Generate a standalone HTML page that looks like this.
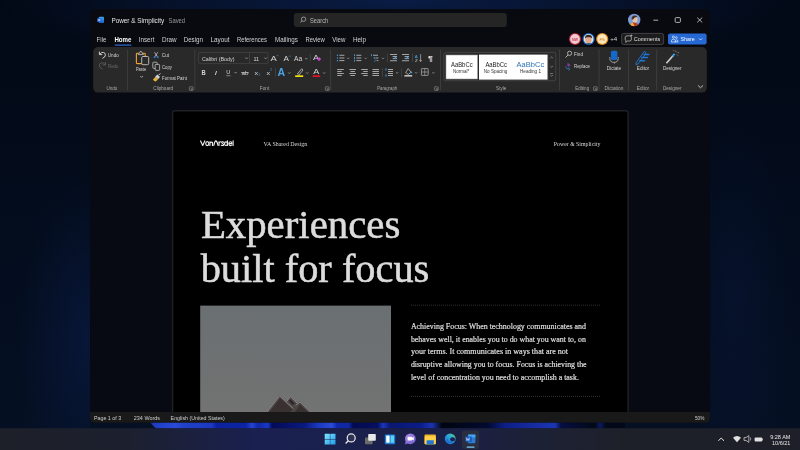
<!DOCTYPE html>
<html><head><meta charset="utf-8"><title>Word</title>
<style>
*{margin:0;padding:0}
html,body{width:800px;height:450px;overflow:hidden;background:#030816}
svg{display:block;will-change:transform}
text{white-space:pre}
</style></head><body>
<svg width="800" height="450" viewBox="0 0 800 450">
<defs>
<linearGradient id="wall" x1="0" y1="0" x2="0" y2="1">
 <stop offset="0" stop-color="#020916"/><stop offset="1" stop-color="#051024"/>
</linearGradient>
<radialGradient id="wtop" cx="0.5" cy="0" r="0.5" gradientTransform="translate(0,0) scale(1,0.3)">
 <stop offset="0" stop-color="#0c2150" stop-opacity="0.8"/><stop offset="1" stop-color="#0c2150" stop-opacity="0"/>
</radialGradient>
<clipPath id="docclip"><rect x="90" y="93" width="620" height="319"/></clipPath>
</defs>
<rect x="0" y="0" width="800" height="450" fill="url(#wall)" rx="0"/>
<rect x="0" y="0" width="800" height="450" fill="url(#wtop)" rx="0"/>
<radialGradient id="wleft" cx="90" cy="340" r="90" gradientUnits="userSpaceOnUse" gradientTransform="translate(90 340) scale(0.8 1.8) translate(-90 -340)"><stop offset="0" stop-color="#0a1c48" stop-opacity="0.6"/><stop offset="1" stop-color="#0a1c48" stop-opacity="0"/></radialGradient>
<rect x="0" y="0" width="90" height="429" fill="url(#wleft)" rx="0"/>
<radialGradient id="wright" cx="735" cy="300" r="80" gradientUnits="userSpaceOnUse" gradientTransform="translate(735 300) scale(0.7 2.2) translate(-735 -300)"><stop offset="0" stop-color="#0a1c48" stop-opacity="0.3"/><stop offset="1" stop-color="#0a1c48" stop-opacity="0"/></radialGradient>
<rect x="710" y="0" width="90" height="429" fill="url(#wright)" rx="0"/>
<rect x="90" y="9" width="620" height="414" fill="#080a10" rx="5"/>
<rect x="90" y="93" width="620" height="320" fill="#070a13" rx="0"/>
<rect x="93.2" y="47" width="613.6" height="45.6" fill="#292929" rx="5"/>
<rect x="293.8" y="13" width="213" height="14" fill="#252525" rx="3"/>
<g clip-path="url(#docclip)">
<rect x="172.55" y="110.75" width="455.6" height="330" fill="#000" rx="2.6" stroke="#1f2023" stroke-width="1.5"/>
</g>
<path d="M90 412 H710 V418 A4.8 4.8 0 0 1 705.2 422.8 H94.8 A4.8 4.8 0 0 1 90 418 Z" fill="#191919"/>
<linearGradient id="bloom" x1="150" y1="0" x2="625" y2="0" gradientUnits="userSpaceOnUse"><stop offset="0.0000" stop-color="#0a1850"/><stop offset="0.0063" stop-color="#1c3cc0"/><stop offset="0.0526" stop-color="#2a4ad8"/><stop offset="0.0737" stop-color="#2040c8"/><stop offset="0.1305" stop-color="#1c38c0"/><stop offset="0.1389" stop-color="#0c22a0"/><stop offset="0.2021" stop-color="#0c24a4"/><stop offset="0.2147" stop-color="#2444d0"/><stop offset="0.2274" stop-color="#1028a8"/><stop offset="0.2484" stop-color="#1838c8"/><stop offset="0.2568" stop-color="#030a58"/><stop offset="0.3263" stop-color="#0a1a80"/><stop offset="0.3537" stop-color="#1a38c0"/><stop offset="0.3832" stop-color="#2a4ad8"/><stop offset="0.3937" stop-color="#1028a8"/><stop offset="0.4189" stop-color="#1028a0"/><stop offset="0.4274" stop-color="#030a50"/><stop offset="0.4800" stop-color="#060f60"/><stop offset="0.4905" stop-color="#1a36c0"/><stop offset="0.5053" stop-color="#0a1870"/><stop offset="0.5684" stop-color="#0a1c88"/><stop offset="0.5937" stop-color="#1a34b0"/><stop offset="0.6147" stop-color="#010510"/><stop offset="0.7116" stop-color="#020a30"/><stop offset="0.7474" stop-color="#0e1e88"/><stop offset="0.8526" stop-color="#1a36b4"/><stop offset="0.8653" stop-color="#050e40"/><stop offset="0.9368" stop-color="#020818"/><stop offset="0.9474" stop-color="#0a1a60"/><stop offset="0.9600" stop-color="#020818"/><stop offset="1.0000" stop-color="#020818"/></linearGradient>
<linearGradient id="tbar" x1="0" y1="0" x2="800" y2="0" gradientUnits="userSpaceOnUse">
<stop offset="0" stop-color="#1d2029"/><stop offset="0.16" stop-color="#1c202e"/><stop offset="0.32" stop-color="#1a2050"/><stop offset="0.55" stop-color="#1b2048"/>
<stop offset="0.7" stop-color="#1d2132"/><stop offset="0.78" stop-color="#1e2029"/><stop offset="1" stop-color="#1e2029"/></linearGradient>
<path d="M150 422.8 L625 422.8 L625 428.4 L156 428.4 Z" fill="url(#bloom)"/>
<rect x="0" y="428.2" width="800" height="21.8" fill="url(#tbar)" rx="0"/>
<g>
<linearGradient id="wic" x1="0" y1="0" x2="0" y2="1"><stop offset="0" stop-color="#41a5ee"/><stop offset="1" stop-color="#1b5fc4"/></linearGradient>
<rect x="98.8" y="16.8" width="5.2" height="6.3" rx="0.9" fill="url(#wic)"/>
<rect x="97.2" y="18.2" width="4.3" height="3.9" rx="0.6" fill="#2a68d0"/>
<ellipse cx="99.2" cy="20" rx="1.3" ry="1" fill="#b8d4f8" opacity="0.8"/>
</g>
<text x="111.4" y="22.5" font-family="Liberation Sans" font-size="6.7" fill="#e4e4e4" textLength="52.8" lengthAdjust="spacingAndGlyphs">Power &amp; Simplicity</text>
<text x="168.5" y="22.5" font-family="Liberation Sans" font-size="6.7" fill="#9a9a9a" textLength="16.6" lengthAdjust="spacingAndGlyphs">Saved</text>
<circle cx="303.6" cy="19.2" r="2.2" stroke="#bdbdbd" stroke-width="0.7" fill="none"/>
<path d="M302 20.8 L300.4 22.5" stroke="#bdbdbd" stroke-width="0.8" fill="none"/>
<text x="310" y="22.6" font-family="Liberation Sans" font-size="6.4" fill="#b8b8b8" textLength="18.2" lengthAdjust="spacingAndGlyphs">Search</text>
<clipPath id="avc"><circle cx="634.2" cy="20" r="6.2"/></clipPath>
<g clip-path="url(#avc)"><rect x="627" y="13" width="15" height="15" fill="#7d9bd4"/><ellipse cx="635" cy="19.6" rx="2.6" ry="3.2" fill="#e6c2a6"/><path d="M631.6 19.6 Q631.4 15.4 635 15.6 Q637.2 15.8 637.4 17 Q634.4 16.6 633.2 19.6 Z" fill="#4a3428"/><path d="M629.6 27 Q630.4 22.4 633.6 22.4 L636.2 23 Q638.6 23.6 638.6 27 Z" fill="#b83a22"/><path d="M630 27 Q630.6 22.8 632.6 22.2 L634.2 25.4 L633 27 Z" fill="#e8b53a"/></g>
<path d="M653.4 20.2 H658.2" stroke="#cfcfcf" stroke-width="0.85" fill="none"/>
<rect x="675.2" y="17.6" width="5.2" height="4.8" fill="none" rx="1" stroke="#cfcfcf" stroke-width="0.85"/>
<path d="M697.2 17.6 L702.2 22.4 M702.2 17.6 L697.2 22.4" stroke="#cfcfcf" stroke-width="0.85" fill="none"/>
<text x="96.6" y="42.2" font-family="Liberation Sans" font-size="6.9" fill="#d2d2d2" textLength="9.8" lengthAdjust="spacingAndGlyphs">File</text>
<text x="114.4" y="42.2" font-family="Liberation Sans" font-size="6.9" fill="#ffffff" textLength="17" lengthAdjust="spacingAndGlyphs" font-weight="bold">Home</text>
<text x="138.8" y="42.2" font-family="Liberation Sans" font-size="6.9" fill="#d2d2d2" textLength="15.6" lengthAdjust="spacingAndGlyphs">Insert</text>
<text x="161.9" y="42.2" font-family="Liberation Sans" font-size="6.9" fill="#d2d2d2" textLength="14.7" lengthAdjust="spacingAndGlyphs">Draw</text>
<text x="183.7" y="42.2" font-family="Liberation Sans" font-size="6.9" fill="#d2d2d2" textLength="19.3" lengthAdjust="spacingAndGlyphs">Design</text>
<text x="210.4" y="42.2" font-family="Liberation Sans" font-size="6.9" fill="#d2d2d2" textLength="19.2" lengthAdjust="spacingAndGlyphs">Layout</text>
<text x="236.9" y="42.2" font-family="Liberation Sans" font-size="6.9" fill="#d2d2d2" textLength="30.1" lengthAdjust="spacingAndGlyphs">References</text>
<text x="275" y="42.2" font-family="Liberation Sans" font-size="6.9" fill="#d2d2d2" textLength="22.9" lengthAdjust="spacingAndGlyphs">Mailings</text>
<text x="305.4" y="42.2" font-family="Liberation Sans" font-size="6.9" fill="#d2d2d2" textLength="19.3" lengthAdjust="spacingAndGlyphs">Review</text>
<text x="332.2" y="42.2" font-family="Liberation Sans" font-size="6.9" fill="#d2d2d2" textLength="13.2" lengthAdjust="spacingAndGlyphs">View</text>
<text x="352.9" y="42.2" font-family="Liberation Sans" font-size="6.9" fill="#d2d2d2" textLength="13.1" lengthAdjust="spacingAndGlyphs">Help</text>
<rect x="114.6" y="44.4" width="16.8" height="1.4" fill="#2f66cc" rx="0.6"/>
<rect x="127.1" y="49.5" width="1" height="41.0" fill="#3d3d3d" rx="0"/>
<rect x="194.3" y="49.5" width="1" height="41.0" fill="#3d3d3d" rx="0"/>
<rect x="330.1" y="49.5" width="1" height="41.0" fill="#3d3d3d" rx="0"/>
<rect x="440.1" y="49.5" width="1" height="41.0" fill="#3d3d3d" rx="0"/>
<rect x="559.1" y="49.5" width="1" height="41.0" fill="#3d3d3d" rx="0"/>
<rect x="598.5" y="49.5" width="1" height="41.0" fill="#3d3d3d" rx="0"/>
<rect x="628.1" y="49.5" width="1" height="41.0" fill="#3d3d3d" rx="0"/>
<rect x="656.2" y="49.5" width="1" height="41.0" fill="#3d3d3d" rx="0"/>
<path d="M99.8 54.2 Q101.4 52 103.4 52.4 Q105.6 53 105.4 55.2 Q105.2 57.2 102.4 58.4" stroke="#dcdcdc" stroke-width="0.9" fill="none"/>
<path d="M99.4 51.6 V54.6 H102.2" stroke="#dcdcdc" stroke-width="0.9" fill="none"/>
<text x="107.8" y="56.6" font-family="Liberation Sans" font-size="5.6" fill="#d6d6d6" textLength="11" lengthAdjust="spacingAndGlyphs">Undo</text>
<path d="M105 64.6 Q103.4 62.4 101.4 62.8 Q99.2 63.4 99.4 65.6 Q99.6 67.6 102.4 69.2" stroke="#5e5e5e" stroke-width="0.9" fill="none"/>
<path d="M105.4 62 V65 H102.6" stroke="#5e5e5e" stroke-width="0.9" fill="none"/>
<text x="108" y="68.3" font-family="Liberation Sans" font-size="5.6" fill="#6a6a6a" textLength="10.4" lengthAdjust="spacingAndGlyphs">Redo</text>
<text x="111.9" y="89.6" font-family="Liberation Sans" font-size="5.2" fill="#a9a9a9" textLength="10.8" lengthAdjust="spacingAndGlyphs" text-anchor="middle">Undo</text>
<rect x="136.4" y="53.2" width="8.8" height="10.4" fill="none" rx="0.8" stroke="#f0a430" stroke-width="1.1"/>
<path d="M138.2 54.6 L140.8 51 L143.4 54.6 Z" fill="#2a2a2a" stroke="#c8c8c8" stroke-width="0.8" stroke-linejoin="round"/>
<rect x="141.7" y="56.5" width="7" height="8.2" fill="#2a2a2a" rx="1.1" stroke="#bdbdbd" stroke-width="0.95"/>
<text x="135.9" y="70.6" font-family="Liberation Sans" font-size="5.6" fill="#d6d6d6" textLength="10.3" lengthAdjust="spacingAndGlyphs">Paste</text>
<path d="M140.4 76.1 L141.6 77.3 L142.8 76.1" stroke="#cfcfcf" stroke-width="0.8" fill="none"/>
<path d="M154.5 52.2 L157.6 57 M157.8 52.2 L154.7 57" stroke="#d8d8d8" stroke-width="0.7" fill="none"/>
<circle cx="154.6" cy="57.3" r="0.95" fill="#2a78c0"/><circle cx="157.8" cy="57.3" r="0.95" fill="#2a78c0"/>
<text x="161.8" y="56.8" font-family="Liberation Sans" font-size="5.6" fill="#d6d6d6" textLength="7.3" lengthAdjust="spacingAndGlyphs">Cut</text>
<rect x="152.8" y="62.2" width="4.4" height="6.2" fill="none" rx="0.8" stroke="#d8d8d8" stroke-width="0.7"/>
<rect x="155.2" y="64.4" width="4.4" height="6" fill="#2a2a2a" rx="0.8" stroke="#d8d8d8" stroke-width="0.7"/>
<text x="162" y="68.6" font-family="Liberation Sans" font-size="5.6" fill="#d6d6d6" textLength="10" lengthAdjust="spacingAndGlyphs">Copy</text>
<path d="M153 79.4 L155.6 76.8 L158 79.2 L155.8 81.6 Q154 81.2 153 79.4 Z" fill="#e8b23a"/>
<path d="M155.2 76.4 L157.4 74.4 L160 77 L158 79.2 Z" fill="#d0d0d0"/>
<path d="M158.6 75.2 L160.4 73.4" stroke="#cfcfcf" stroke-width="1.0" fill="none"/>
<text x="162" y="80.4" font-family="Liberation Sans" font-size="5.6" fill="#d6d6d6" textLength="25" lengthAdjust="spacingAndGlyphs">Format Paint</text>
<text x="163.2" y="89.6" font-family="Liberation Sans" font-size="5.2" fill="#a9a9a9" textLength="19.8" lengthAdjust="spacingAndGlyphs" text-anchor="middle">Clipboard</text>
<rect x="189.4" y="86.8" width="3.6" height="3.6" fill="none" rx="0.3" stroke="#9a9a9a" stroke-width="0.55"/>
<path d="M190.6 88.0 L192.20000000000002 89.6 M192.20000000000002 88.39999999999999 V89.6 H191.0" stroke="#9a9a9a" stroke-width="0.5" fill="none"/>
<rect x="198.4" y="52.4" width="69.6" height="11.2" fill="none" rx="2" stroke="#444" stroke-width="0.8"/>
<rect x="249.2" y="52.8" width="0.8" height="10.400000000000006" fill="#444" rx="0"/>
<text x="202" y="60.6" font-family="Liberation Sans" font-size="5.6" fill="#d6d6d6" textLength="32.5" lengthAdjust="spacingAndGlyphs">Calibri (Body)</text>
<path d="M245.29999999999998 57.485 L246.6 58.915000000000006 L247.9 57.485" stroke="#bdbdbd" stroke-width="0.6" fill="none"/>
<text x="253.4" y="60.6" font-family="Liberation Sans" font-size="5.6" fill="#d6d6d6" textLength="5.6" lengthAdjust="spacingAndGlyphs">11</text>
<path d="M264.3 57.485 L265.6 58.915000000000006 L266.90000000000003 57.485" stroke="#bdbdbd" stroke-width="0.6" fill="none"/>
<text x="270.6" y="60.6" font-family="Liberation Sans" font-size="8" fill="#d6d6d6" textLength="6.3" lengthAdjust="spacingAndGlyphs">A</text>
<path d="M276.6 56.2 L277.5 55.2 L278.4 56.2" stroke="#3b9be0" stroke-width="0.6" fill="none"/>
<text x="283.6" y="60.6" font-family="Liberation Sans" font-size="6.4" fill="#d6d6d6" textLength="5.4" lengthAdjust="spacingAndGlyphs">A</text>
<path d="M289 56.6 L289.8 55.7 L290.6 56.6" stroke="#3b9be0" stroke-width="0.6" fill="none"/>
<text x="294" y="60.6" font-family="Liberation Sans" font-size="6.6" fill="#d6d6d6" textLength="8.2" lengthAdjust="spacingAndGlyphs">Aa</text>
<path d="M305.2 57.995000000000005 L306.3 59.205 L307.40000000000003 57.995000000000005" stroke="#bdbdbd" stroke-width="0.6" fill="none"/>
<rect x="309.84999999999997" y="54.2" width="0.7" height="7.0" fill="#4a4a4a" rx="0"/>
<text x="313" y="60.4" font-family="Liberation Sans" font-size="7" fill="#d6d6d6" textLength="6" lengthAdjust="spacingAndGlyphs">A</text>
<rect x="317.6" y="57.6" width="3" height="3" fill="#c043c8" transform="rotate(45 319.1 59.1)"/>
<text x="201.4" y="74.8" font-family="Liberation Sans" font-size="6.6" fill="#d6d6d6" textLength="4.2" lengthAdjust="spacingAndGlyphs" font-weight="bold">B</text>
<text x="214.6" y="74.6" font-family="Liberation Sans" font-size="6" fill="#d6d6d6" textLength="2.6" lengthAdjust="spacingAndGlyphs" font-style="italic">I</text>
<text x="226.3" y="74.2" font-family="Liberation Sans" font-size="6" fill="#d6d6d6" textLength="4.2" lengthAdjust="spacingAndGlyphs">U</text>
<rect x="226.2" y="75.6" width="4.3" height="0.5" fill="#d6d6d6" rx="0"/>
<path d="M234.5 71.99499999999999 L235.6 73.205 L236.7 71.99499999999999" stroke="#bdbdbd" stroke-width="0.6" fill="none"/>
<text x="241.4" y="74.6" font-family="Liberation Sans" font-size="5.8" fill="#d6d6d6" textLength="7" lengthAdjust="spacingAndGlyphs">ab</text>
<rect x="241" y="72.5" width="7.8" height="0.55" fill="#d6d6d6" rx="0"/>
<text x="254.6" y="74.6" font-family="Liberation Sans" font-size="6" fill="#d6d6d6" textLength="3.6" lengthAdjust="spacingAndGlyphs">x</text>
<text x="258.4" y="76.4" font-family="Liberation Sans" font-size="3.4" fill="#3b9be0" textLength="1.8" lengthAdjust="spacingAndGlyphs">2</text>
<text x="266.4" y="74.6" font-family="Liberation Sans" font-size="6" fill="#d6d6d6" textLength="3.6" lengthAdjust="spacingAndGlyphs">x</text>
<text x="270.2" y="70.6" font-family="Liberation Sans" font-size="3.4" fill="#3b9be0" textLength="1.8" lengthAdjust="spacingAndGlyphs">2</text>
<rect x="275.15" y="68.4" width="0.7" height="8.199999999999989" fill="#4a4a4a" rx="0"/>
<text x="277.6" y="76" font-family="Liberation Sans" font-size="10" fill="#4aa3e6" textLength="7.6" lengthAdjust="spacingAndGlyphs" font-weight="bold">A</text>
<path d="M288.2 72.395 L289.3 73.605 L290.40000000000003 72.395" stroke="#bdbdbd" stroke-width="0.6" fill="none"/>
<path d="M297.4 74 L301.6 68.8 L303 70 L298.8 75.2 Z" stroke="#d8d8d8" stroke-width="0.7" fill="none"/>
<rect x="295.2" y="75.3" width="8" height="1.7" fill="#f2e600" rx="0"/>
<path d="M306.09999999999997 72.395 L307.2 73.605 L308.3 72.395" stroke="#bdbdbd" stroke-width="0.6" fill="none"/>
<text x="313.2" y="74.2" font-family="Liberation Sans" font-size="7" fill="#d6d6d6" textLength="6" lengthAdjust="spacingAndGlyphs">A</text>
<rect x="312.6" y="75.3" width="7.6" height="1.7" fill="#e81123" rx="0"/>
<path d="M323.09999999999997 72.395 L324.2 73.605 L325.3 72.395" stroke="#bdbdbd" stroke-width="0.6" fill="none"/>
<text x="264.5" y="89.6" font-family="Liberation Sans" font-size="5.2" fill="#a9a9a9" textLength="9.4" lengthAdjust="spacingAndGlyphs" text-anchor="middle">Font</text>
<rect x="325.4" y="86.8" width="3.6" height="3.6" fill="none" rx="0.3" stroke="#9a9a9a" stroke-width="0.55"/>
<path d="M326.59999999999997 88.0 L328.2 89.6 M328.2 88.39999999999999 V89.6 H327.0" stroke="#9a9a9a" stroke-width="0.5" fill="none"/>
<circle cx="337.5" cy="55.2" r="0.75" fill="#3b9be0"/>
<circle cx="337.5" cy="58" r="0.75" fill="#3b9be0"/>
<circle cx="337.5" cy="60.7" r="0.75" fill="#3b9be0"/>
<rect x="339.4" y="54.825" width="5" height="0.75" fill="#cfcfcf" rx="0"/>
<rect x="339.4" y="57.625" width="5" height="0.75" fill="#cfcfcf" rx="0"/>
<rect x="339.4" y="60.325" width="5" height="0.75" fill="#cfcfcf" rx="0"/>
<path d="M347.2 57.75 L348.2 58.849999999999994 L349.2 57.75" stroke="#bdbdbd" stroke-width="0.6" fill="none"/>
<rect x="354.1" y="54.2" width="0.9" height="2" fill="#3b9be0" rx="0"/>
<rect x="354.1" y="57" width="0.9" height="2" fill="#3b9be0" rx="0"/>
<rect x="354.1" y="59.7" width="0.9" height="2" fill="#3b9be0" rx="0"/>
<rect x="356.3" y="54.825" width="5" height="0.75" fill="#cfcfcf" rx="0"/>
<rect x="356.3" y="57.625" width="5" height="0.75" fill="#cfcfcf" rx="0"/>
<rect x="356.3" y="60.325" width="5" height="0.75" fill="#cfcfcf" rx="0"/>
<path d="M364.6 57.75 L365.6 58.849999999999994 L366.6 57.75" stroke="#bdbdbd" stroke-width="0.6" fill="none"/>
<rect x="371" y="54.2" width="0.9" height="2" fill="#3b9be0" rx="0"/>
<rect x="373.8" y="57" width="0.9" height="2" fill="#3b9be0" rx="0"/>
<path d="M375.6 59.6 L374.4 62" stroke="#3b9be0" stroke-width="0.6" fill="none"/>
<rect x="373" y="54.825" width="5" height="0.75" fill="#cfcfcf" rx="0"/>
<rect x="375.4" y="57.625" width="3" height="0.75" fill="#cfcfcf" rx="0"/>
<rect x="376.6" y="60.325" width="1.8" height="0.75" fill="#cfcfcf" rx="0"/>
<path d="M382.0 57.75 L383 58.849999999999994 L384.0 57.75" stroke="#bdbdbd" stroke-width="0.6" fill="none"/>
<rect x="386.95" y="53.6" width="0.7" height="8.399999999999999" fill="#4a4a4a" rx="0"/>
<rect x="390" y="54.225" width="7" height="0.75" fill="#cfcfcf" rx="0"/>
<rect x="390" y="60.425" width="7" height="0.75" fill="#cfcfcf" rx="0"/>
<rect x="392.6" y="56.225" width="4.4" height="0.75" fill="#cfcfcf" rx="0"/>
<rect x="392.6" y="58.325" width="4.4" height="0.75" fill="#cfcfcf" rx="0"/>
<rect x="394.6" y="56.8" width="1.8" height="1.8" fill="#3b9be0"/>
<rect x="402" y="54.225" width="7" height="0.75" fill="#cfcfcf" rx="0"/>
<rect x="402" y="60.425" width="7" height="0.75" fill="#cfcfcf" rx="0"/>
<rect x="404.6" y="56.225" width="4.4" height="0.75" fill="#cfcfcf" rx="0"/>
<rect x="404.6" y="58.325" width="4.4" height="0.75" fill="#cfcfcf" rx="0"/>
<rect x="406.6" y="56.8" width="1.8" height="1.8" fill="#3b9be0"/>
<rect x="412.15" y="53.6" width="0.7" height="8.399999999999999" fill="#4a4a4a" rx="0"/>
<text x="414.8" y="57.8" font-family="Liberation Sans" font-size="4" fill="#3b9be0" textLength="3" lengthAdjust="spacingAndGlyphs" font-weight="bold">A</text>
<text x="415" y="61.6" font-family="Liberation Sans" font-size="4" fill="#cfcfcf" textLength="2.8" lengthAdjust="spacingAndGlyphs">Z</text>
<path d="M420.6 54.2 V61.4 M419.4 60 L420.6 61.5 L421.8 60" stroke="#cfcfcf" stroke-width="0.6" fill="none"/>
<text x="428" y="61.4" font-family="Liberation Sans" font-size="7.4" fill="#e0e0e0" textLength="5" lengthAdjust="spacingAndGlyphs" font-weight="bold">¶</text>
<rect x="337.2" y="69.225" width="6.6" height="0.75" fill="#cfcfcf" rx="0"/>
<rect x="337.2" y="71.225" width="4.6" height="0.75" fill="#cfcfcf" rx="0"/>
<rect x="337.2" y="73.225" width="6.6" height="0.75" fill="#cfcfcf" rx="0"/>
<rect x="337.2" y="75.225" width="4.6" height="0.75" fill="#cfcfcf" rx="0"/>
<rect x="349.4" y="69.225" width="6.6" height="0.75" fill="#cfcfcf" rx="0"/>
<rect x="349.4" y="73.225" width="6.6" height="0.75" fill="#cfcfcf" rx="0"/>
<rect x="350.4" y="71.225" width="4.6" height="0.75" fill="#cfcfcf" rx="0"/>
<rect x="350.4" y="75.225" width="4.6" height="0.75" fill="#cfcfcf" rx="0"/>
<rect x="361.2" y="69.225" width="6.6" height="0.75" fill="#cfcfcf" rx="0"/>
<rect x="361.2" y="73.225" width="6.6" height="0.75" fill="#cfcfcf" rx="0"/>
<rect x="363.2" y="71.225" width="4.6" height="0.75" fill="#cfcfcf" rx="0"/>
<rect x="363.2" y="75.225" width="4.6" height="0.75" fill="#cfcfcf" rx="0"/>
<rect x="372.4" y="69.225" width="6.6" height="0.75" fill="#cfcfcf" rx="0"/>
<rect x="372.4" y="71.225" width="6.6" height="0.75" fill="#cfcfcf" rx="0"/>
<rect x="372.4" y="73.225" width="6.6" height="0.75" fill="#cfcfcf" rx="0"/>
<rect x="372.4" y="75.225" width="6.6" height="0.75" fill="#cfcfcf" rx="0"/>
<rect x="382.25" y="68.2" width="0.7" height="8.599999999999994" fill="#4a4a4a" rx="0"/>
<rect x="388" y="69.225" width="5" height="0.75" fill="#cfcfcf" rx="0"/>
<rect x="388" y="71.225" width="5" height="0.75" fill="#cfcfcf" rx="0"/>
<rect x="388" y="73.225" width="5" height="0.75" fill="#cfcfcf" rx="0"/>
<rect x="388" y="75.225" width="5" height="0.75" fill="#cfcfcf" rx="0"/>
<path d="M386 68.6 V71 M385.1 69.6 L386 68.6 L386.9 69.6 M386 73.8 V76.4 M385.1 75.4 L386 76.4 L386.9 75.4" stroke="#3b9be0" stroke-width="0.6" fill="none"/>
<path d="M396.2 72.25 L397.2 73.35 L398.2 72.25" stroke="#bdbdbd" stroke-width="0.6" fill="none"/>
<rect x="401.25" y="68.2" width="0.7" height="8.599999999999994" fill="#4a4a4a" rx="0"/>
<path d="M405.6 72.6 L408.2 68.6 L411 72.2 L408.4 74.4 Z" stroke="#cfcfcf" stroke-width="0.7" fill="none"/>
<circle cx="411.4" cy="72.4" r="0.9" fill="#3b9be0"/>
<rect x="404.4" y="75.2" width="7.8" height="1.3" fill="#e0e0e0" rx="0"/>
<path d="M415.2 72.25 L416.2 73.35 L417.2 72.25" stroke="#bdbdbd" stroke-width="0.6" fill="none"/>
<rect x="421.4" y="68.6" width="6.8" height="6.8" fill="none" rx="0.5" stroke="#cfcfcf" stroke-width="0.6"/>
<path d="M424.8 68.6 V75.4 M421.4 72 H428.2" stroke="#cfcfcf" stroke-width="0.5" fill="none"/>
<path d="M432.4 72.25 L433.4 73.35 L434.4 72.25" stroke="#bdbdbd" stroke-width="0.6" fill="none"/>
<text x="387.2" y="89.6" font-family="Liberation Sans" font-size="5.2" fill="#a9a9a9" textLength="20" lengthAdjust="spacingAndGlyphs" text-anchor="middle">Paragraph</text>
<rect x="434.6" y="86.8" width="3.6" height="3.6" fill="none" rx="0.3" stroke="#9a9a9a" stroke-width="0.55"/>
<path d="M435.8 88.0 L437.40000000000003 89.6 M437.40000000000003 88.39999999999999 V89.6 H436.20000000000005" stroke="#9a9a9a" stroke-width="0.5" fill="none"/>
<rect x="443.8" y="52.4" width="112" height="28.4" fill="none" rx="2" stroke="#4a4a4a" stroke-width="0.8"/>
<rect x="446" y="55" width="31.6" height="24" fill="#ffffff" rx="0" stroke="#9a9a9a" stroke-width="0.6"/>
<rect x="479" y="54.6" width="68.6" height="25" fill="#ffffff" rx="0"/>
<text x="451" y="66.8" font-family="Liberation Sans" font-size="6.6" fill="#222" textLength="21.6" lengthAdjust="spacingAndGlyphs">AaBbCc</text>
<text x="453" y="73.3" font-family="Liberation Sans" font-size="5.1" fill="#333" textLength="16.2" lengthAdjust="spacingAndGlyphs">Normal*</text>
<text x="485.4" y="66.8" font-family="Liberation Sans" font-size="6.6" fill="#222" textLength="21.6" lengthAdjust="spacingAndGlyphs">AaBbCc</text>
<text x="483.8" y="73.3" font-family="Liberation Sans" font-size="5.1" fill="#333" textLength="23.6" lengthAdjust="spacingAndGlyphs">No Spacing</text>
<text x="516.6" y="66.8" font-family="Liberation Sans" font-size="7.6" fill="#2e74b5" textLength="27.6" lengthAdjust="spacingAndGlyphs">AaBbCc</text>
<text x="520" y="73.3" font-family="Liberation Sans" font-size="5.1" fill="#333" textLength="21" lengthAdjust="spacingAndGlyphs">Heading 1</text>
<rect x="548.6" y="53.6" width="6" height="7.8" fill="#2a2a2a" rx="0"/>
<rect x="548.6" y="62.2" width="6" height="7.8" fill="#2a2a2a" rx="0"/>
<rect x="548.6" y="70.8" width="6" height="7.8" fill="#2a2a2a" rx="0"/>
<path d="M550.3 58.2 L551.6 57 L552.9 58.2" stroke="#bdbdbd" stroke-width="0.55" fill="none"/>
<path d="M550.3 66 L551.6 67.2 L552.9 66" stroke="#bdbdbd" stroke-width="0.55" fill="none"/>
<rect x="550.3" y="73.4" width="2.6" height="0.5" fill="#bdbdbd" rx="0"/>
<path d="M550.3 75 L551.6 76.2 L552.9 75" stroke="#bdbdbd" stroke-width="0.55" fill="none"/>
<rect x="547.9000000000001" y="53.4" width="0.6" height="26.6" fill="#3d3d3d" rx="0"/>
<text x="501.2" y="89.6" font-family="Liberation Sans" font-size="5.2" fill="#a9a9a9" textLength="10.2" lengthAdjust="spacingAndGlyphs" text-anchor="middle">Style</text>
<circle cx="569.6" cy="53.3" r="2.1" stroke="#d0d0d0" stroke-width="0.75" fill="none"/>
<path d="M568.1 54.9 L565.6 57.5" stroke="#d0d0d0" stroke-width="0.85" fill="none"/>
<text x="574" y="56.4" font-family="Liberation Sans" font-size="5.6" fill="#d6d6d6" textLength="9" lengthAdjust="spacingAndGlyphs">Find</text>
<path d="M567.6 62.6 L570.6 65.2 L569.2 66.8 L567.2 66 Z" fill="#7a3c98"/>
<path d="M565.4 66.2 Q565.8 69.4 569.6 69 M568.2 67.8 L569.8 69 L568.6 70.4" stroke="#2a80c0" stroke-width="0.75" fill="none"/>
<text x="574" y="68.4" font-family="Liberation Sans" font-size="5.6" fill="#d6d6d6" textLength="16" lengthAdjust="spacingAndGlyphs">Replace</text>
<text x="582.2" y="89.6" font-family="Liberation Sans" font-size="5.2" fill="#a9a9a9" textLength="14" lengthAdjust="spacingAndGlyphs" text-anchor="middle">Editing</text>
<rect x="593.6" y="86.8" width="3.6" height="3.6" fill="none" rx="0.3" stroke="#9a9a9a" stroke-width="0.55"/>
<path d="M594.8000000000001 88.0 L596.4 89.6 M596.4 88.39999999999999 V89.6 H595.2" stroke="#9a9a9a" stroke-width="0.5" fill="none"/>
<path d="M609.8 57 V58.4 Q609.8 62.4 614 62.4 Q618.2 62.4 618.2 58.4 V57" stroke="#9c9c9c" stroke-width="1" fill="none"/>
<rect x="614" y="62.2" width="0.9" height="1.4" fill="#9c9c9c" rx="0"/>
<rect x="610.9" y="50.7" width="6.5" height="9.4" fill="#1668c8" rx="1.7"/>
<text x="614" y="70.2" font-family="Liberation Sans" font-size="5.6" fill="#d6d6d6" textLength="14.4" lengthAdjust="spacingAndGlyphs" text-anchor="middle">Dictate</text>
<text x="614" y="89.6" font-family="Liberation Sans" font-size="5.2" fill="#a9a9a9" textLength="18.8" lengthAdjust="spacingAndGlyphs" text-anchor="middle">Dictation</text>
<path d="M636.2 62.6 L644.4 51.4 L646.2 52.8 L638 64 L636 64.6 Z" fill="none" stroke="#1f78d8" stroke-width="0.9" stroke-linejoin="round"/>
<rect x="643.4" y="53.7" width="6" height="1.5" fill="#1b74d8" rx="0.5"/>
<rect x="641.2" y="56.8" width="6.8" height="1.5" fill="#1b74d8" rx="0.5"/>
<rect x="639.2" y="59.9" width="6" height="1.5" fill="#1b74d8" rx="0.5"/>
<text x="643" y="70.2" font-family="Liberation Sans" font-size="5.6" fill="#d6d6d6" textLength="12.4" lengthAdjust="spacingAndGlyphs" text-anchor="middle">Editor</text>
<text x="643" y="89.6" font-family="Liberation Sans" font-size="5.2" fill="#a9a9a9" textLength="12.4" lengthAdjust="spacingAndGlyphs" text-anchor="middle">Editor</text>
<path d="M666.4 63.2 L673.4 55.2" stroke="#cfcfcf" stroke-width="1.6" fill="none"/>
<path d="M672.4 56.4 L674.6 53.8" stroke="#3b9be0" stroke-width="1.8" fill="none"/>
<path d="M675.8 50.6 V52 M677.6 52.6 H679 M677 54.6 L678 55.6 M674 51 L673.4 50.2" stroke="#d0d0d0" stroke-width="0.5" fill="none"/>
<text x="672.2" y="70.2" font-family="Liberation Sans" font-size="5.6" fill="#d6d6d6" textLength="18.6" lengthAdjust="spacingAndGlyphs" text-anchor="middle">Designer</text>
<text x="672.2" y="89.6" font-family="Liberation Sans" font-size="5.2" fill="#a9a9a9" textLength="18.6" lengthAdjust="spacingAndGlyphs" text-anchor="middle">Designer</text>
<path d="M698 85.4 L700.5 87.8 L703 85.4" stroke="#cfcfcf" stroke-width="0.9" fill="none"/>
<circle cx="575" cy="39" r="6.1" fill="#b3263a"/><circle cx="575" cy="39" r="4.9" fill="#f2c9d1"/>
<text x="575" y="40.6" font-family="Liberation Sans" font-size="3.8" fill="#c0465a" textLength="6" lengthAdjust="spacingAndGlyphs" font-weight="bold" text-anchor="middle">MW</text>
<circle cx="588.6" cy="39" r="6.1" fill="#1766c2"/><circle cx="588.6" cy="39" r="4.9" fill="#dfe6ea"/>
<clipPath id="av2"><circle cx="588.6" cy="39" r="4.9"/></clipPath><g clip-path="url(#av2)"><ellipse cx="588.4" cy="39.8" rx="3.2" ry="3.6" fill="#e2aa8a"/><path d="M584.8 38.6 Q585 34.6 588.6 34.8 Q592.4 35 592.2 38.6 Q590.6 36.8 588.4 37.2 Q586.2 36.8 584.8 38.6Z" fill="#3a2a22"/><path d="M584 44.2 Q588.6 41.6 593.2 44.2 V45 H584Z" fill="#3c3a44"/></g>
<circle cx="602.2" cy="39" r="6.1" fill="#dc8a1c"/><circle cx="602.2" cy="39" r="4.9" fill="#fde5bc"/>
<text x="602.2" y="40.8" font-family="Liberation Sans" font-size="4.4" fill="#b77420" textLength="5.4" lengthAdjust="spacingAndGlyphs" text-anchor="middle">FS</text>
<text x="610.2" y="41.2" font-family="Liberation Sans" font-size="6" fill="#d6d6d6" textLength="7" lengthAdjust="spacingAndGlyphs">+4</text>
<rect x="621.6" y="33.4" width="42" height="11.2" fill="#1c1c1c" rx="2" stroke="#4e4e4e" stroke-width="0.8"/>
<path d="M627.6 35.8 H629.6 Q631.4 35.8 631.4 37.6 V39.2 Q631.4 41 629.6 41 H627.4 L625.8 42.4 V40.6 Q625.2 40.2 625.2 39.2 V37.6 Q625.2 35.8 627.6 35.8 Z" stroke="#d0d0d0" stroke-width="0.7" fill="none"/>
<path d="M631.4 34.4 V36.6 M630.3 35.5 H632.5" stroke="#d0d0d0" stroke-width="0.55" fill="none"/>
<text x="633.8" y="41.4" font-family="Liberation Sans" font-size="6" fill="#e0e0e0" textLength="26.4" lengthAdjust="spacingAndGlyphs">Comments</text>
<rect x="668" y="33.4" width="38.6" height="11.2" fill="#2669d5" rx="2"/>
<circle cx="673.4" cy="37" r="1.1" fill="none" stroke="#fff" stroke-width="0.6"/><circle cx="676.4" cy="37.6" r="0.9" fill="none" stroke="#fff" stroke-width="0.6"/>
<path d="M671.6 42 V40.4 Q671.6 39.2 673.4 39.2 Q675.2 39.2 675.2 40.4 V42 M675.6 42 V40.8 Q675.8 39.8 676.6 39.8 Q677.8 39.8 677.8 40.8 V42 M671.2 42 H678.2" stroke="#ffffff" stroke-width="0.6" fill="none"/>
<text x="680.6" y="41.4" font-family="Liberation Sans" font-size="6" fill="#ffffff" textLength="14" lengthAdjust="spacingAndGlyphs">Share</text>
<path d="M699 38.4 L700.6 40 L702.2 38.4" stroke="#ffffff" stroke-width="0.65" fill="none"/>
<g stroke="#ececec" stroke-width="1.15" fill="none" stroke-linecap="round" stroke-linejoin="round"><path d="M200.6 140.9 L202.7 145.5 L204.8 140.9"/><ellipse cx="207.3" cy="143.6" rx="1.55" ry="1.95"/><path d="M209.9 145.5 V141.8 M209.9 143.1 Q211.2 141.5 212.5 142.4 V145.5"/><path d="M213.8 145.5 Q214.8 140.6 215.9 140.9 Q217.2 141.3 218 145.5"/><path d="M219 145.5 V141.8 M219 143.2 Q219.8 141.7 220.9 141.8"/><path d="M223.9 142.3 Q223.1 141.5 222.2 141.8 Q221.2 142.5 222.4 143.4 Q223.9 144.1 223.7 145 Q222.9 145.9 221.3 145.2"/><ellipse cx="226" cy="143.7" rx="1.45" ry="1.85"/><path d="M227.5 140.8 V145.5"/><path d="M229 143.6 H231.9 Q231.9 141.7 230.4 141.7 Q228.9 141.7 228.9 143.7 Q228.9 145.6 230.5 145.6 Q231.4 145.6 231.9 145"/><path d="M233.1 140.8 V145.5"/></g>
<text x="263.5" y="145.7" font-family="Liberation Serif" font-size="6.2" fill="#d8d8d8" textLength="43.6" lengthAdjust="spacingAndGlyphs">VA Shared Design</text>
<text x="553.8" y="145.9" font-family="Liberation Serif" font-size="6.2" fill="#d8d8d8" textLength="46.6" lengthAdjust="spacingAndGlyphs">Power &amp; Simplicity</text>
<text x="200.9" y="237.6" font-family="Liberation Serif" font-size="40.3" fill="#dcdcdc" textLength="199.4" lengthAdjust="spacingAndGlyphs" stroke="#dcdcdc" stroke-width="0.55">Experiences</text>
<text x="200.7" y="282" font-family="Liberation Serif" font-size="40.3" fill="#dcdcdc" textLength="228.6" lengthAdjust="spacingAndGlyphs" stroke="#dcdcdc" stroke-width="0.55">built for focus</text>
<path d="M411 305.2 H600 M411 396.4 H600" stroke="#5a5a5a" stroke-width="0.7" stroke-dasharray="0.8 1.2"/>
<text x="410.9" y="329.3" font-family="Liberation Serif" font-size="7.9" fill="#dcdcdc" textLength="175" lengthAdjust="spacingAndGlyphs" stroke="#dcdcdc" stroke-width="0.22">Achieving Focus: When technology communicates and</text>
<text x="410.9" y="341.8" font-family="Liberation Serif" font-size="7.9" fill="#dcdcdc" textLength="175" lengthAdjust="spacingAndGlyphs" stroke="#dcdcdc" stroke-width="0.22">behaves well, it enables you to do what you want to, on</text>
<text x="410.9" y="354.4" font-family="Liberation Serif" font-size="7.9" fill="#dcdcdc" textLength="157.2" lengthAdjust="spacingAndGlyphs" stroke="#dcdcdc" stroke-width="0.22">your terms. It communicates in ways that are not</text>
<text x="410.9" y="366.9" font-family="Liberation Serif" font-size="7.9" fill="#dcdcdc" textLength="175.7" lengthAdjust="spacingAndGlyphs" stroke="#dcdcdc" stroke-width="0.22">disruptive allowing you to focus. Focus is achieving the</text>
<text x="410.9" y="379.5" font-family="Liberation Serif" font-size="7.9" fill="#dcdcdc" textLength="168" lengthAdjust="spacingAndGlyphs" stroke="#dcdcdc" stroke-width="0.22">level of concentration you need to accomplish a task.</text>
<g clip-path="url(#docclip)">
<linearGradient id="imgg" x1="0" y1="0" x2="0" y2="1"><stop offset="0" stop-color="#6a6f72"/><stop offset="1" stop-color="#727372"/></linearGradient>
<rect x="200.2" y="305.6" width="190.8" height="106.4" fill="url(#imgg)" rx="0"/>
<path d="M266 413 L279.7 395.3 L286.5 401.4 L290.3 396 L297.4 403 L300 401.6 L311.5 413 Z" fill="#4a4445"/>
<path d="M268.8 413 L280.2 398.2 L292.5 409.6 L289 413 Z" fill="#38312f"/>
<path d="M294.5 413 L300 404.6 L308.6 413 Z" fill="#38322f"/>
<path d="M288.8 400.8 L290.5 399.4 L294.5 403.6 L292.8 405 Z" fill="#2a2526"/>
<path d="M266.6 412.6 L279.7 395.9 L293.4 408.6 M286.6 401.6 L290.3 396.5 L297.6 403.6 M295.6 405.4 L300 402.1 L311 412.6" stroke="#8d8384" stroke-width="1" fill="none"/>
</g>
<text x="93.9" y="419.6" font-family="Liberation Sans" font-size="5.2" fill="#cfcfcf" textLength="27.3" lengthAdjust="spacingAndGlyphs">Page 1 of 3</text>
<text x="133.8" y="419.6" font-family="Liberation Sans" font-size="5.2" fill="#cfcfcf" textLength="26.2" lengthAdjust="spacingAndGlyphs">234 Words</text>
<text x="170.6" y="419.6" font-family="Liberation Sans" font-size="5.2" fill="#cfcfcf" textLength="54.2" lengthAdjust="spacingAndGlyphs">English (United States)</text>
<text x="695" y="419.6" font-family="Liberation Sans" font-size="5.2" fill="#cfcfcf" textLength="9.4" lengthAdjust="spacingAndGlyphs">50%</text>
<defs>
<linearGradient id="winlogo" x1="324.6" y1="433.8" x2="335.4" y2="444.8" gradientUnits="userSpaceOnUse"><stop offset="0" stop-color="#80e4ff"/><stop offset="1" stop-color="#1d9ae8"/></linearGradient>
<linearGradient id="teams" x1="0" y1="0" x2="1" y2="1"><stop offset="0" stop-color="#b48ce8"/><stop offset="1" stop-color="#6a5ad0"/></linearGradient>
<linearGradient id="edge" x1="1" y1="0" x2="0" y2="1"><stop offset="0" stop-color="#62d45a"/><stop offset="0.45" stop-color="#27a8e0"/><stop offset="1" stop-color="#1862c8"/></linearGradient>
</defs>
<rect x="324.7" y="433.8" width="5.2" height="5.2" fill="url(#winlogo)" rx="0.3"/>
<rect x="324.7" y="439.40000000000003" width="5.2" height="5.2" fill="url(#winlogo)" rx="0.3"/>
<rect x="330.3" y="433.8" width="5.2" height="5.2" fill="url(#winlogo)" rx="0.3"/>
<rect x="330.3" y="439.40000000000003" width="5.2" height="5.2" fill="url(#winlogo)" rx="0.3"/>
<circle cx="351.2" cy="437.9" r="4" fill="#2c3256" stroke="#e6e6e6" stroke-width="1.25"/>
<path d="M348.3 440.8 L345.6 443.5" stroke="#e6e6e6" stroke-width="1.4" fill="none"/>
<rect x="365" y="437.4" width="7.6" height="6.8" fill="#6b6b6b" rx="0.8"/>
<rect x="368.2" y="434" width="7.6" height="6.8" fill="#e8e8e8" rx="0.8"/>
<rect x="384.8" y="434.4" width="10.4" height="9.8" fill="#1b7fd8" rx="1"/>
<rect x="386.2" y="435.6" width="3.4" height="7.2" fill="#ffffff" rx="0.4"/>
<rect x="390.6" y="435.6" width="3.4" height="7.2" fill="#5ad1f0" rx="0.4"/>
<circle cx="410.4" cy="438.8" r="5.4" fill="url(#teams)"/>
<path d="M405.8 441 L405 444.4 L408.6 443" fill="#8a70d8"/>
<rect x="407.6" y="436.8" width="4.4" height="3.8" fill="#ffffff" rx="0.5"/>
<path d="M412 437.8 L413.8 436.8 V440.6 L412 439.6 Z" fill="#ffffff"/>
<rect x="424.6" y="434.4" width="11.2" height="9.8" fill="#f0b429" rx="0.8"/>
<rect x="424.6" y="436.2" width="11.2" height="8" fill="#ffd04a" rx="0.8"/>
<rect x="426.6" y="440.2" width="7.2" height="4" fill="#1f78d8" rx="0.5"/>
<circle cx="450.2" cy="438.8" r="5.4" fill="url(#edge)"/>
<ellipse cx="452.6" cy="439.4" rx="2.5" ry="2.1" fill="#1b2150"/>
<path d="M446.2 440.4 Q447.4 443.6 451 443.2 Q453.6 442.8 454.6 441 Q452 442.6 449.6 441.6 Q447.6 440.8 447.6 438.4 Z" fill="#1e70d0"/>
<rect x="462" y="430.6" width="17" height="18.4" fill="#2a2f40" rx="2"/>
<rect x="467.8" y="434.6" width="7.6" height="8.6" fill="#2b7cd3" rx="0.8"/>
<rect x="468.2" y="434.6" width="7.2" height="2.8" fill="#41a5ee" rx="0"/>
<rect x="465.4" y="436.4" width="6.4" height="5.4" fill="#185abd" rx="0.6"/>
<path d="M466.2 437.6 l0.8 3 0.9-2.1 0.9 2.1 0.8-3" stroke="#ffffff" stroke-width="0.55" fill="none"/>
<rect x="466.6" y="446.4" width="8" height="1.3" fill="#7cc8f8" rx="0.6"/>
<path d="M718.4 440.8 L721.2 438 L724 440.8" stroke="#e8e8e8" stroke-width="1.0" fill="none"/>
<path d="M733 437.8 Q737 434.2 741 437.8 L737 442.2 Z" fill="#e0e0e0"/>
<path d="M744 437.6 H746 L748.8 435.6 V442.4 L746 440.4 H744 Z" fill="none" stroke="#e0e0e0" stroke-width="0.7"/>
<path d="M750.2 437.4 Q751.4 439 750.2 440.6" stroke="#e0e0e0" stroke-width="0.6" fill="none"/>
<rect x="754.6" y="437.6" width="7.6" height="3.8" fill="#e0e0e0" rx="1"/>
<rect x="762.2" y="438.6" width="0.7" height="1.8" fill="#e0e0e0" rx="0"/>
<text x="790.4" y="438.6" font-family="Liberation Sans" font-size="5.4" fill="#e8e8e8" textLength="20.2" lengthAdjust="spacingAndGlyphs" text-anchor="end">9:28 AM</text>
<text x="790.4" y="444.8" font-family="Liberation Sans" font-size="5.4" fill="#e8e8e8" textLength="18.4" lengthAdjust="spacingAndGlyphs" text-anchor="end">10/6/21</text>
</svg>
</body></html>
